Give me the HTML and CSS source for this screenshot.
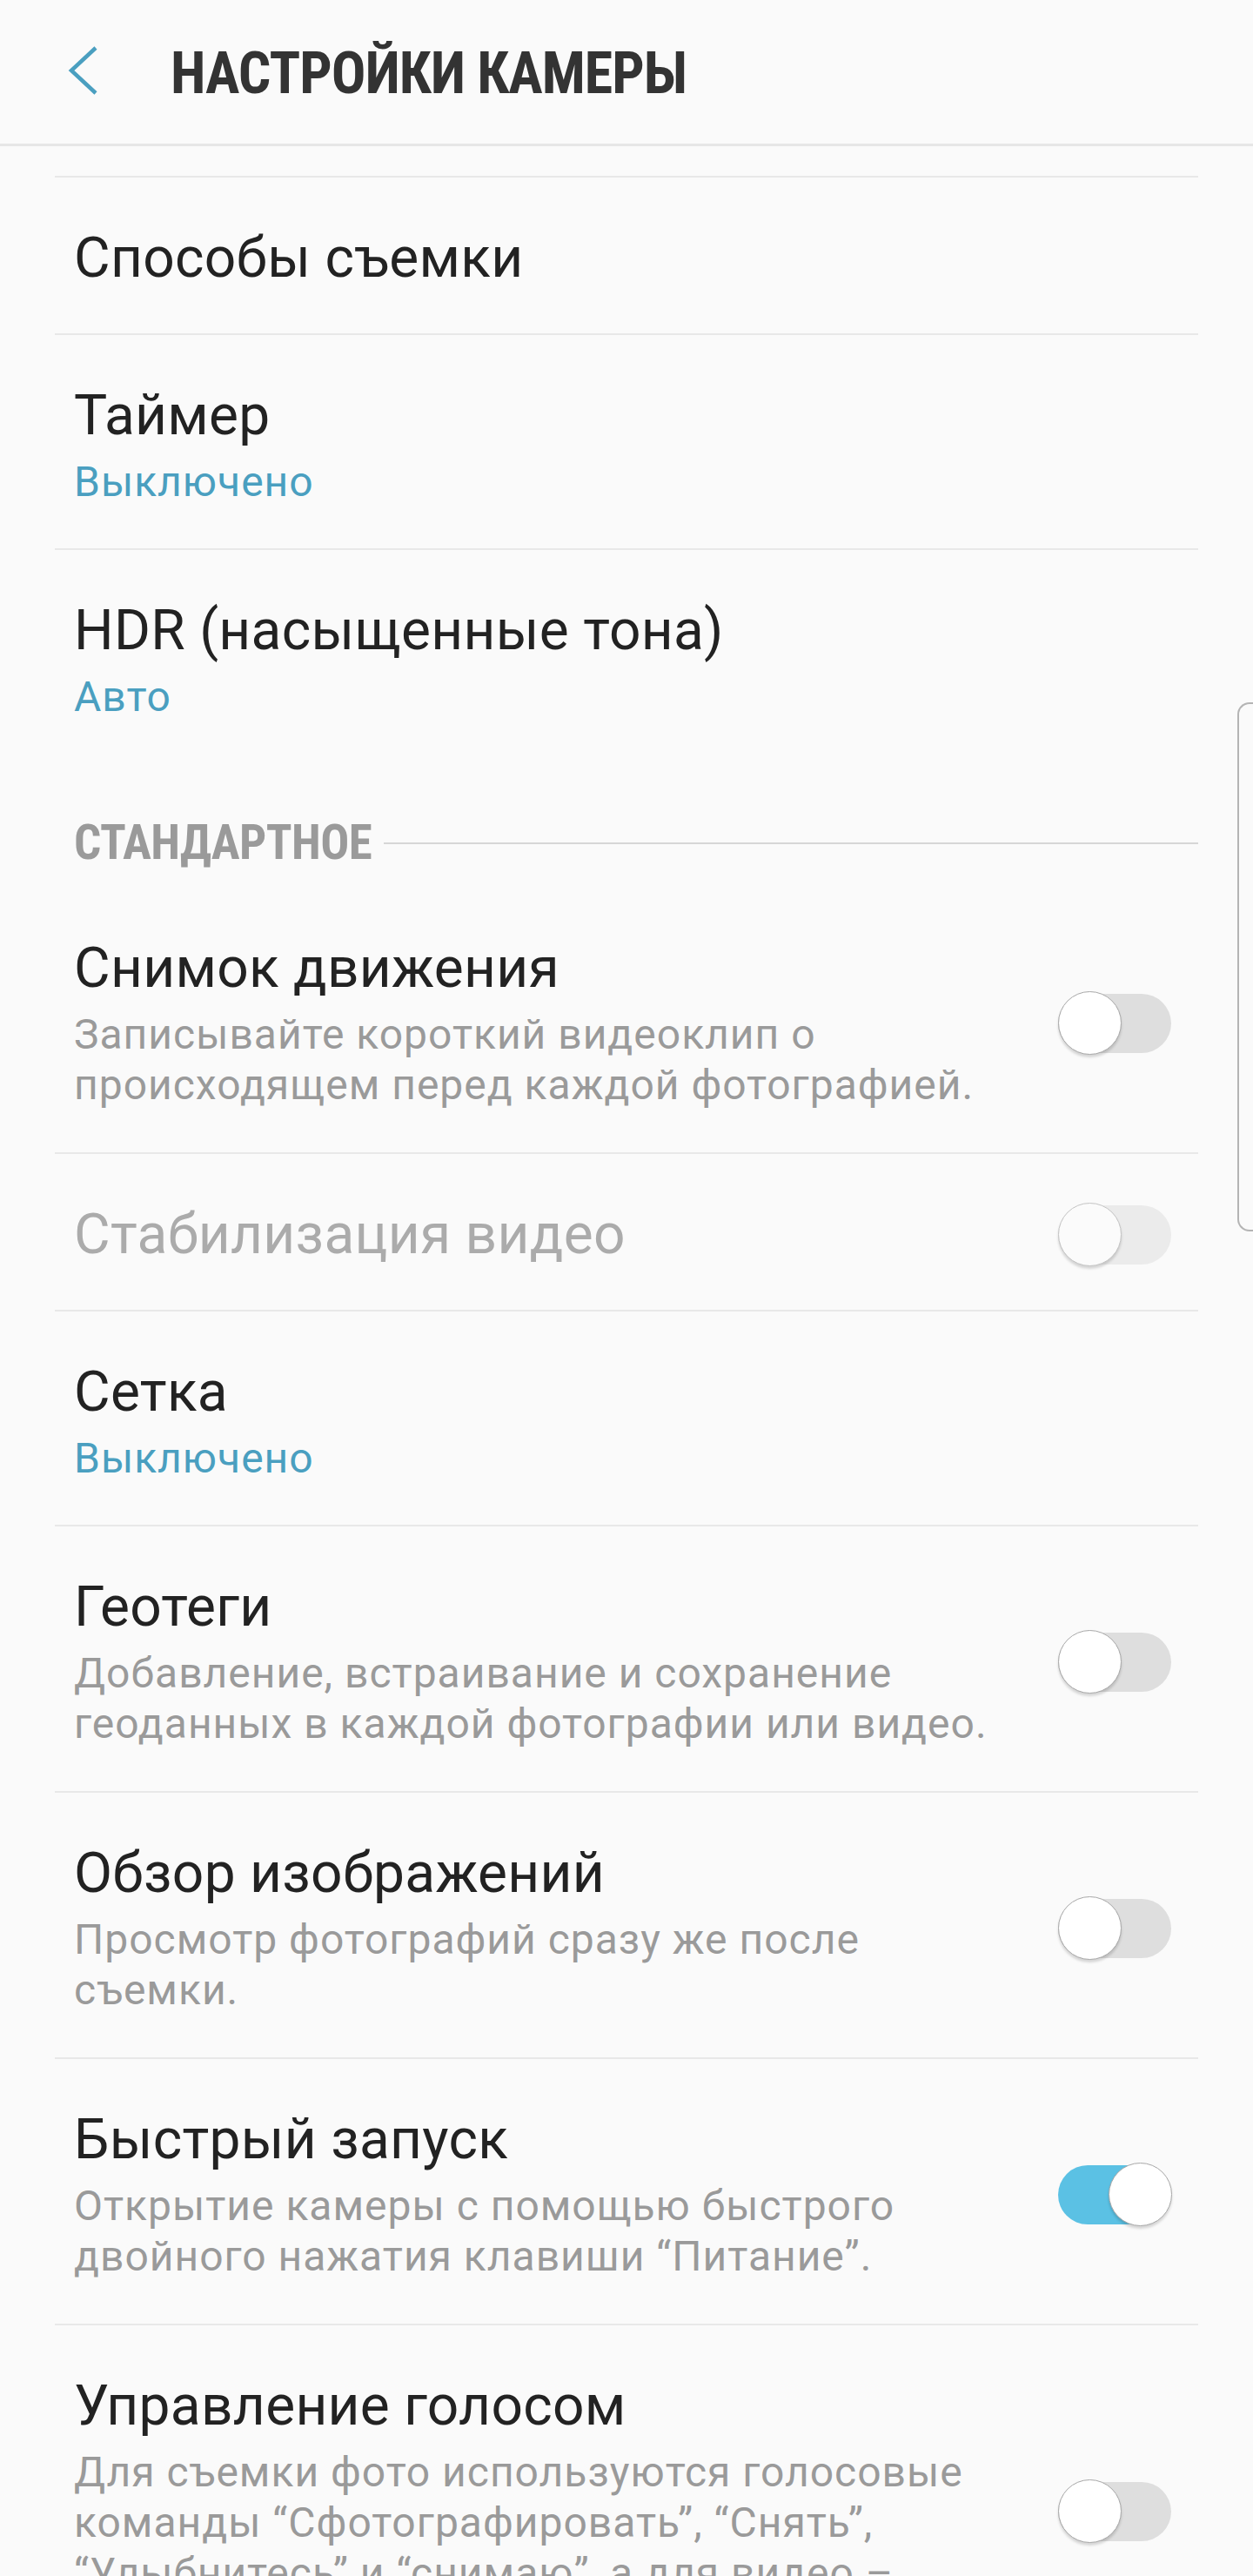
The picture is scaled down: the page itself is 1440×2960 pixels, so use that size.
FILE: index.html
```html
<!DOCTYPE html>
<html>

<head>
  <meta name="viewport" content="width=device-width, initial-scale=1">
  <title>Настройки камеры</title>
  <link rel="stylesheet" href="styles.css">
</head>

<body>
  <header class="app-bar">
    <button class="back-btn" aria-label="Назад">
      <svg width="36" height="58" viewBox="0 0 36 58">
        <polyline points="33,3 5,29 33,55" fill="none" stroke="#4a9fc0" stroke-width="4.5" />
      </svg>
    </button>
    <h1 class="app-title">НАСТРОЙКИ КАМЕРЫ</h1>
  </header>

  <div class="settings">
    <div class="row row-cut"></div>

    <div class="row">
      <div class="row-text">
        <div class="row-title">Способы съемки</div>
      </div>
    </div>

    <div class="row">
      <div class="row-text">
        <div class="row-title">Таймер</div>
        <div class="row-value">Выключено</div>
      </div>
    </div>

    <div class="row no-line">
      <div class="row-text">
        <div class="row-title">HDR (насыщенные тона)</div>
        <div class="row-value">Авто</div>
      </div>
    </div>

    <div class="section-head">
      <span>СТАНДАРТНОЕ</span>
    </div>

    <div class="row">
      <div class="row-text">
        <div class="row-title">Снимок движения</div>
        <div class="row-desc">Записывайте короткий видеоклип о происходящем перед каждой фотографией.</div>
      </div>
      <div class="switch"></div>
    </div>

    <div class="row disabled">
      <div class="row-text">
        <div class="row-title">Стабилизация видео</div>
      </div>
      <div class="switch"></div>
    </div>

    <div class="row">
      <div class="row-text">
        <div class="row-title">Сетка</div>
        <div class="row-value">Выключено</div>
      </div>
    </div>

    <div class="row">
      <div class="row-text">
        <div class="row-title">Геотеги</div>
        <div class="row-desc">Добавление, встраивание и сохранение геоданных в каждой фотографии или видео.</div>
      </div>
      <div class="switch"></div>
    </div>

    <div class="row">
      <div class="row-text">
        <div class="row-title">Обзор изображений</div>
        <div class="row-desc">Просмотр фотографий сразу же после съемки.</div>
      </div>
      <div class="switch"></div>
    </div>

    <div class="row">
      <div class="row-text">
        <div class="row-title">Быстрый запуск</div>
        <div class="row-desc">Открытие камеры с помощью быстрого двойного нажатия клавиши “Питание”.</div>
      </div>
      <div class="switch on"></div>
    </div>

    <div class="row">
      <div class="row-text">
        <div class="row-title">Управление голосом</div>
        <div class="row-desc">Для съемки фото используются голосовые команды “Сфотографировать”, “Снять”, “Улыбнитесь” и “снимаю”, а для видео – “Запись видео”.</div>
      </div>
      <div class="switch"></div>
    </div>
  </div>

  <div class="edge-handle"></div>
</body>

</html>
```

FILE: styles.css
```css
body {
  margin: 0;
  background-color: #fafafa;
  font-family: Roboto, "Noto Sans", sans-serif;
  color: #222;
}

.app-bar {
  height: 165px;
  display: flex;
  align-items: center;
  border-bottom: 3px solid #e6e6e6;
}

.back-btn {
  background: none;
  border: none;
  padding: 0;
  margin-left: 77px;
  width: 36px;
  height: 58px;
  margin-top: -3px;
}

.back-btn svg {
  display: block;
}

.app-title {
  margin: 4px 0 0 83px;
  font-size: 66px;
  font-weight: 700;
  font-stretch: 75%;
  color: #333;
  letter-spacing: -1px;
}

.settings {
  padding: 0 63px;
}

.row {
  display: flex;
  align-items: center;
  padding: 55px 31px 48px 22px;
  border-bottom: 2px solid #e8e8e8;
}

.row.no-line {
  border-bottom: none;
}

.row-cut {
  padding: 0;
  height: 34px;
}

.row-text {
  flex: 1;
}

.row-title {
  font-size: 64px;
  line-height: 76px;
  letter-spacing: 0.3px;
}

.row-value,
.row-desc {
  font-size: 48px;
  line-height: 57px;
  margin-top: 9px;
  letter-spacing: 1px;
}

.row-value {
  color: #4a9fc0;
}

.row-desc {
  color: #9a9a9a;
  line-height: 58px;
}

.disabled .row-title {
  color: #ababab;
}

.section-head {
  display: flex;
  align-items: center;
  gap: 14px;
  padding: 68px 0 28px 22px;
  font-size: 55px;
  font-weight: 700;
  font-stretch: 75%;
  letter-spacing: -0.6px;
  color: #9a9a9a;
  line-height: 47px;
}

.section-head::after {
  content: "";
  flex: 1;
  height: 2px;
  background-color: #d6d6d6;
}

/* тумблер */
.switch {
  position: relative;
  flex: none;
  width: 130px;
  height: 68px;
  margin-left: 56px;
  border-radius: 34px;
  background-color: #dedede;
}

.switch::after {
  content: "";
  position: absolute;
  top: -3px;
  left: 0;
  width: 71px;
  height: 71px;
  border-radius: 50%;
  background-color: #fff;
  border: 1.5px solid #a8a8a8;
  box-shadow: 0 3px 3px rgba(0, 0, 0, 0.15);
}

.switch.on {
  background-color: #5bc1e4;
}

.switch.on::after {
  left: auto;
  right: -1px;
}

.disabled .switch {
  background-color: #ebebeb;
}

.disabled .switch::after {
  border-color: #c4c4c4;
  background-color: #fbfbfb;
}

.edge-handle {
  position: absolute;
  top: 807px;
  left: 1422px;
  width: 30px;
  height: 604px;
  border: 2px solid #b4b4b4;
  border-right: none;
  border-radius: 14px 0 0 14px;
}
```
